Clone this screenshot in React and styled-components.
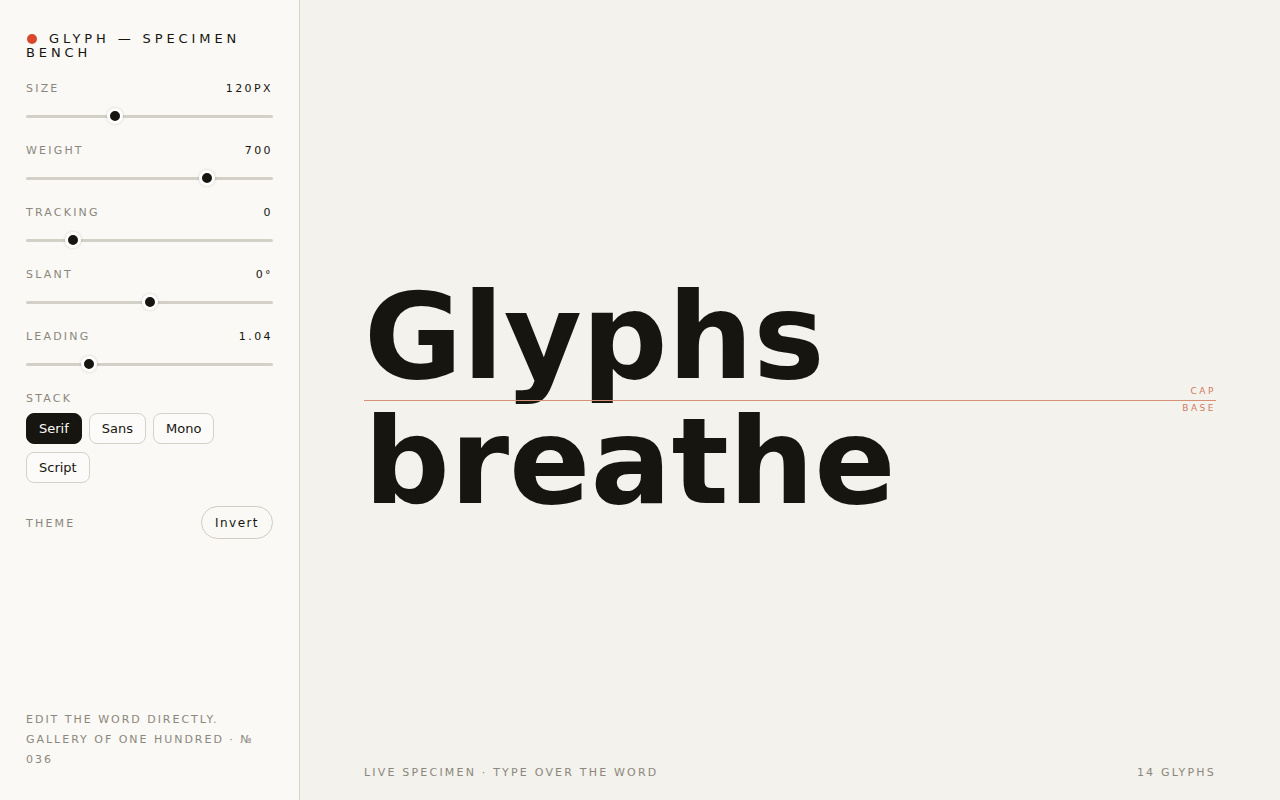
import React, { useState } from 'react';
import styled, { createGlobalStyle } from 'styled-components';

const GlobalStyle = createGlobalStyle`
  html, body {
    margin: 0;
    padding: 0;
    height: 100%;
  }
  body {
    font-family: 'DejaVu Sans', 'Noto Sans', sans-serif;
    color: #17150f;
    background: #f3f2ed;
  }
  #root {
    height: 100%;
  }
`;

const Page = styled.div`
  height: 100vh;
  display: grid;
  grid-template-columns: 300px 1fr;
`;

const Sidebar = styled.aside`
  background: #faf9f6;
  border-right: 1px solid #d8d5cd;
  padding: 32px 26px 30px 26px;
  display: flex;
  flex-direction: column;
  box-sizing: border-box;
`;

const Title = styled.h1`
  margin: 0 0 21px 0;
  font-size: 13px;
  font-weight: 400;
  letter-spacing: 0.3em;
  line-height: 14px;
  text-transform: uppercase;
`;

const Dot = styled.span`
  display: inline-block;
  width: 10px;
  height: 10px;
  border-radius: 50%;
  background: #d9482b;
  margin: 0 12px 0 1px;
  vertical-align: -1px;
`;

const Control = styled.div`
  display: flex;
  flex-direction: column;
  margin-bottom: 18px;
`;

const ControlHead = styled.div`
  display: flex;
  justify-content: space-between;
  align-items: center;
  height: 14px;
`;

const Label = styled.span`
  font-size: 11px;
  letter-spacing: 0.2em;
  color: #8c877c;
  text-transform: uppercase;
`;

const Value = styled.span`
  font-size: 11px;
  letter-spacing: 0.22em;
  color: #17150f;
`;

const Range = styled.input.attrs({ type: 'range' })`
  -webkit-appearance: none;
  appearance: none;
  width: 100%;
  margin: 13px 0 1px 0;
  height: 16px;
  background: transparent;

  &::-webkit-slider-runnable-track {
    height: 3px;
    background: #d3d0c7;
    border-radius: 2px;
  }
  &::-webkit-slider-thumb {
    -webkit-appearance: none;
    width: 16px;
    height: 16px;
    margin-top: -6.5px;
    border-radius: 50%;
    background: #17150f;
    border: 3px solid #ffffff;
    box-sizing: border-box;
    box-shadow: 0 0 3px rgba(0, 0, 0, 0.18);
  }
`;

const StackLabel = styled(Label)`
  display: block;
  margin-top: 1px;
  margin-bottom: 8px;
`;

const Chips = styled.div`
  display: flex;
  flex-wrap: wrap;
  gap: 8px 7px;
  width: 200px;
`;

const Chip = styled.button`
  height: 31px;
  padding: 0 12px;
  border-radius: 8px;
  border: 1px solid ${p => (p.$active ? '#17150f' : '#d6d2c9')};
  background: ${p => (p.$active ? '#17150f' : '#fcfbf9')};
  color: ${p => (p.$active ? '#faf9f6' : '#17150f')};
  font-family: 'DejaVu Sans', sans-serif;
  font-size: 13px;
  cursor: pointer;
`;

const ThemeRow = styled.div`
  display: flex;
  justify-content: space-between;
  align-items: center;
  margin-top: 23px;
`;

const ThemeLabel = styled(Label)`
  padding-top: 1px;
`;

const Pill = styled.button`
  height: 33px;
  padding: 0 13px;
  border-radius: 17px;
  border: 1px solid #d0ccc3;
  background: transparent;
  font-family: 'DejaVu Sans', sans-serif;
  font-size: 12px;
  letter-spacing: 0.12em;
  color: #17150f;
  cursor: pointer;
`;

const SideFoot = styled.p`
  margin: auto 0 0 0;
  font-size: 11px;
  line-height: 20px;
  letter-spacing: 0.18em;
  color: #8c877c;
  text-transform: uppercase;
`;

const Main = styled.main`
  display: flex;
  flex-direction: column;
  padding: 0 64px 16px 64px;
  box-sizing: border-box;
`;

const Stage = styled.div`
  flex: 1;
  display: flex;
  align-items: center;
  padding-top: 40px;
`;

const Specimen = styled.div`
  position: relative;
  width: 100%;
`;

const Word = styled.div`
  font-family: 'DejaVu Sans', sans-serif;
  font-weight: ${p => p.$weight};
  font-size: ${p => p.$size}px;
  line-height: ${p => p.$leading};
  letter-spacing: ${p => p.$tracking}em;
  color: #17150f;
  outline: none;
`;

const Guide = styled.div`
  position: absolute;
  left: 0;
  right: 0;
  top: 125px;
  height: 1px;
  background: #d98f76;
  pointer-events: none;
`;

const GuideTag = styled.span`
  position: absolute;
  right: 0;
  font-size: 9px;
  letter-spacing: 0.28em;
  color: #d27a60;
  ${p => (p.$above ? 'bottom: 5px;' : 'top: 3px;')}
`;

const Footer = styled.footer`
  display: flex;
  justify-content: space-between;
  align-items: center;
  height: 24px;
`;

const FootText = styled.span`
  font-size: 11px;
  letter-spacing: 0.2em;
  color: #8c877c;
  text-transform: uppercase;
`;

const controls = [
  { key: 'size', label: 'Size', min: 8, max: 328, step: 1, fmt: v => `${v}PX` },
  { key: 'weight', label: 'Weight', min: 100, max: 900, step: 100, fmt: v => `${v}` },
  { key: 'tracking', label: 'Tracking', min: -0.1, max: 0.5, step: 0.01, fmt: v => `${v}` },
  { key: 'slant', label: 'Slant', min: -15, max: 15, step: 1, fmt: v => `${v}°` },
  { key: 'leading', label: 'Leading', min: 0.8, max: 1.8, step: 0.01, fmt: v => v.toFixed(2) },
];

export default function App() {
  const [vals, setVals] = useState({ size: 120, weight: 700, tracking: 0, slant: 0, leading: 1.04 });
  const [stack, setStack] = useState('Serif');
  const word = 'Glyphs breathe';

  return (
    <>
      <GlobalStyle />
      <Page>
        <Sidebar>
          <Title><Dot />Glyph — Specimen Bench</Title>
          {controls.map(c => (
            <Control key={c.key}>
              <ControlHead>
                <Label>{c.label}</Label>
                <Value>{c.fmt(vals[c.key])}</Value>
              </ControlHead>
              <Range
                min={c.min}
                max={c.max}
                step={c.step}
                value={vals[c.key]}
                onChange={e => setVals({ ...vals, [c.key]: Number(e.target.value) })}
              />
            </Control>
          ))}
          <StackLabel>Stack</StackLabel>
          <Chips>
            {['Serif', 'Sans', 'Mono', 'Script'].map(s => (
              <Chip key={s} $active={s === stack} onClick={() => setStack(s)}>{s}</Chip>
            ))}
          </Chips>
          <ThemeRow>
            <ThemeLabel>Theme</ThemeLabel>
            <Pill>Invert</Pill>
          </ThemeRow>
          <SideFoot>
            Edit the word directly.<br />
            Gallery of one hundred · № 036
          </SideFoot>
        </Sidebar>
        <Main>
          <Stage>
            <Specimen>
              <Word
                contentEditable
                suppressContentEditableWarning
                $size={vals.size}
                $weight={vals.weight}
                $leading={vals.leading}
                $tracking={vals.tracking}
              >
                {word}
              </Word>
              <Guide>
                <GuideTag $above>CAP</GuideTag>
                <GuideTag>BASE</GuideTag>
              </Guide>
            </Specimen>
          </Stage>
          <Footer>
            <FootText>Live specimen · type over the word</FootText>
            <FootText>{word.length} glyphs</FootText>
          </Footer>
        </Main>
      </Page>
    </>
  );
}
